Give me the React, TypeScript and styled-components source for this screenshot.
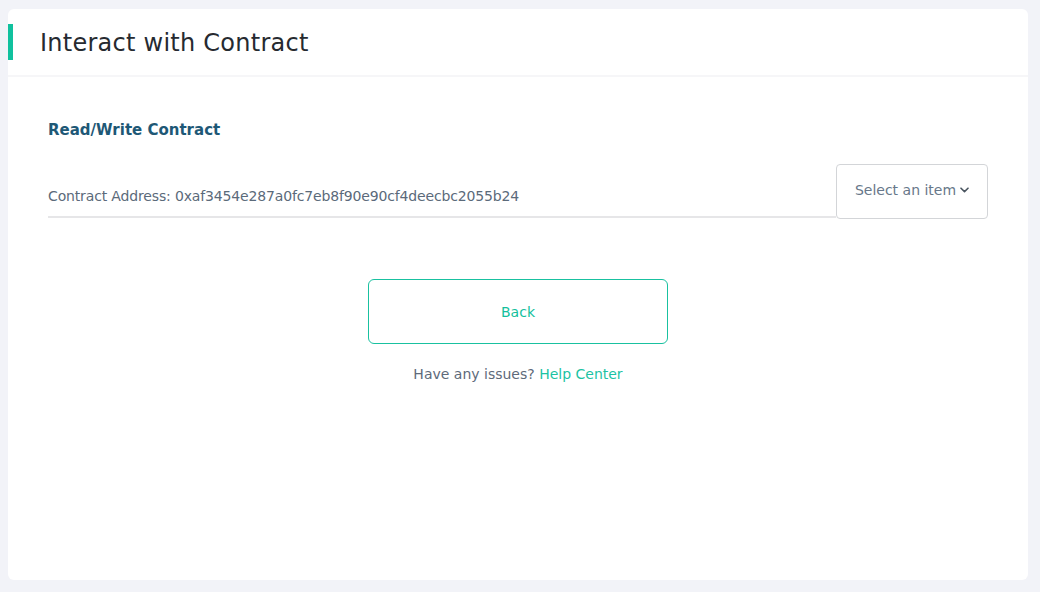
import styled, { createGlobalStyle } from 'styled-components';

const GlobalStyle = createGlobalStyle`
  html, body {
    margin: 0;
    padding: 0;
    background: #f2f3f8;
  }

  body {
    font-family: 'DejaVu Sans', 'Noto Sans', sans-serif;
  }
`;

const Page = styled.div`
  padding: 9px 12px 12px 8px;
  height: 592px;
  box-sizing: border-box;
`;

const Card = styled.div`
  background: #ffffff;
  border-radius: 6px;
  height: 571px;
  overflow: hidden;
`;

const Header = styled.div`
  display: flex;
  align-items: center;
  height: 66px;
  border-bottom: 2px solid #f6f6f8;
`;

const Accent = styled.span`
  width: 5px;
  height: 36px;
  background: #10c19e;
  margin-right: 27px;
`;

const Title = styled.h1`
  margin: 2px 0 0 0;
  font-size: 24px;
  font-weight: 400;
  color: #262a30;
  letter-spacing: 0.25px;
`;

const Body = styled.div`
  padding: 43px 40px 0 40px;
  display: flex;
  flex-direction: column;
`;

const SectionTitle = styled.h2`
  margin: 0;
  font-size: 15px;
  font-weight: 700;
  color: #1e5876;
  line-height: 20px;
`;

const InputRow = styled.div`
  display: flex;
  align-items: flex-start;
  margin-top: 24px;
`;

const AddressField = styled.div`
  flex: 1;
  height: 54px;
  padding-top: 21px;
  box-sizing: border-box;
  border-bottom: 2px solid #e6e6e8;
  font-size: 14px;
  letter-spacing: -0.15px;
  color: #5b6a7a;
  line-height: 22px;
`;

const Select = styled.button`
  width: 152px;
  height: 55px;
  border: 1px solid #d3d5d8;
  border-radius: 4px;
  background: #ffffff;
  font-family: inherit;
  font-size: 14px;
  color: #68788a;
  display: flex;
  align-items: center;
  justify-content: center;
  gap: 4px;
  padding: 0 0 4px 0;
`;

const Actions = styled.div`
  display: flex;
  flex-direction: column;
  align-items: center;
  margin-top: 60px;
`;

const BackButton = styled.button`
  width: 300px;
  height: 65px;
  border: 1px solid #19c1a0;
  border-radius: 6px;
  background: #ffffff;
  color: #14bf9c;
  font-family: inherit;
  font-size: 14px;
`;

const Help = styled.p`
  margin: 20px 0 0 0;
  font-size: 14px;
  color: #5e6a7a;
  line-height: 20px;
`;

const HelpLink = styled.a`
  color: #1cc3a3;
  text-decoration: none;
`;

function Chevron() {
  return (
    <svg width="9" height="6" viewBox="0 0 9 6" fill="none">
      <path d="M1 1.2 L4.5 4.6 L8 1.2" stroke="#4a5560" strokeWidth="1.6" strokeLinecap="round" strokeLinejoin="round" />
    </svg>
  );
}

export default function App() {
  return (
    <Page>
      <GlobalStyle />
      <Card>
        <Header>
          <Accent />
          <Title>Interact with Contract</Title>
        </Header>
        <Body>
          <SectionTitle>Read/Write Contract</SectionTitle>
          <InputRow>
            <AddressField>Contract Address: 0xaf3454e287a0fc7eb8f90e90cf4deecbc2055b24</AddressField>
            <Select>
              Select an item
              <Chevron />
            </Select>
          </InputRow>
          <Actions>
            <BackButton>Back</BackButton>
            <Help>
              Have any issues? <HelpLink href="#">Help Center</HelpLink>
            </Help>
          </Actions>
        </Body>
      </Card>
    </Page>
  );
}
